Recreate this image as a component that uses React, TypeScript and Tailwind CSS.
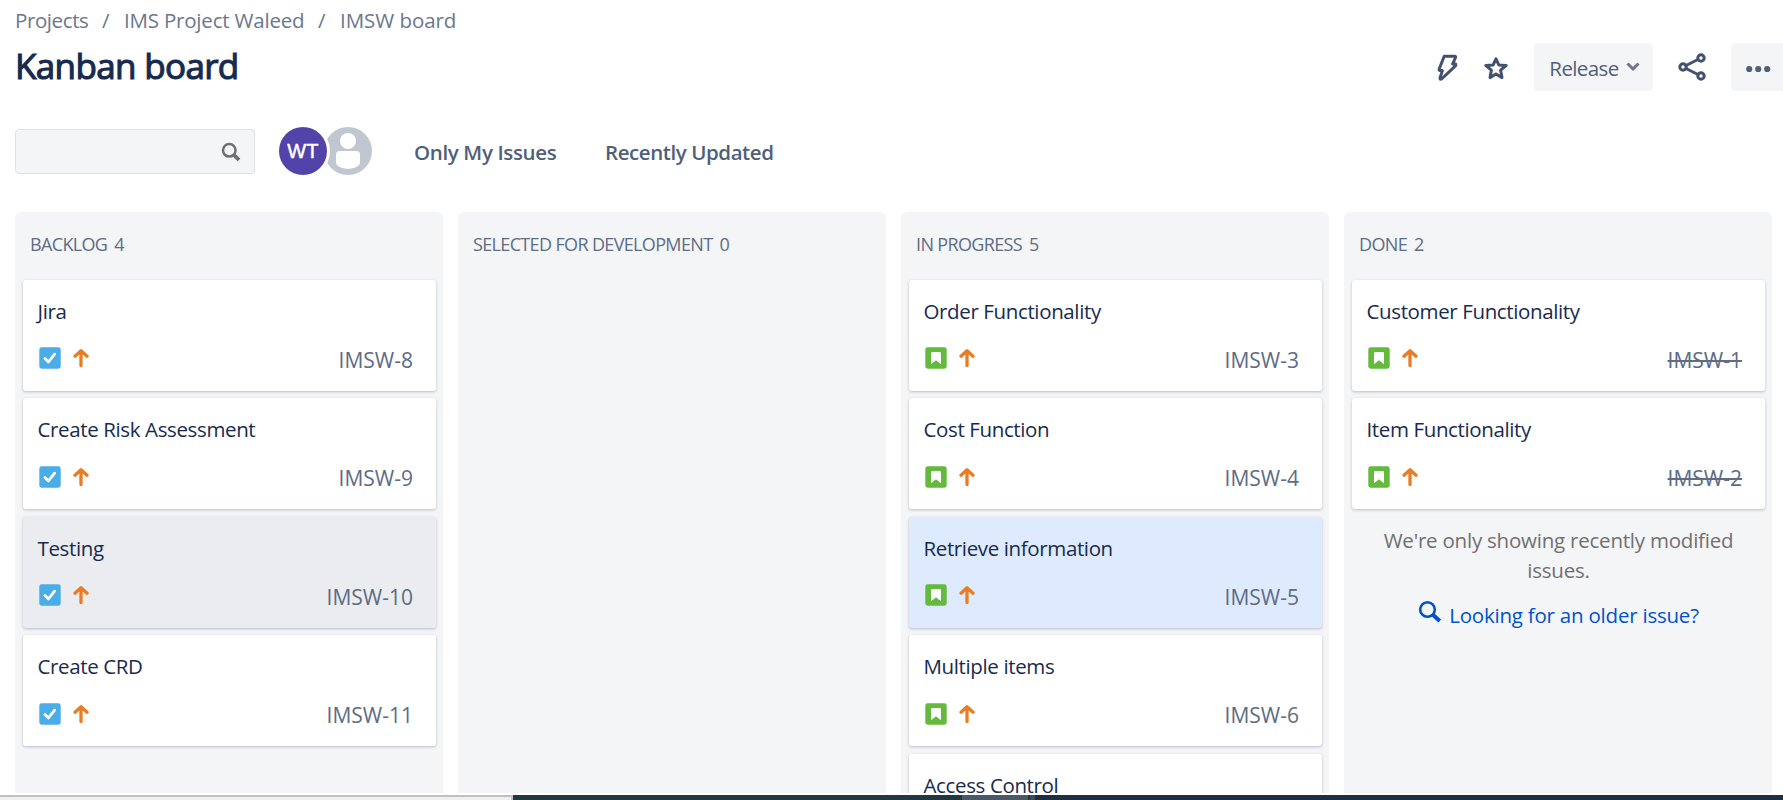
import React from "react";

type Kind = "task" | "story";
type Tone = "plain" | "hover" | "selected";
type Issue = { title: string; id: string; kind: Kind; tone?: Tone; done?: boolean };
type Column = { name: string; issues: Issue[]; note?: boolean; count: number };

const columns: Column[] = [
  {
    name: "BACKLOG",
    count: 4,
    issues: [
      { title: "Jira", id: "IMSW-8", kind: "task" },
      { title: "Create Risk Assessment", id: "IMSW-9", kind: "task" },
      { title: "Testing", id: "IMSW-10", kind: "task", tone: "hover" },
      { title: "Create CRD", id: "IMSW-11", kind: "task" },
    ],
  },
  { name: "SELECTED FOR DEVELOPMENT", count: 0, issues: [] },
  {
    name: "IN PROGRESS",
    count: 5,
    issues: [
      { title: "Order Functionality", id: "IMSW-3", kind: "story" },
      { title: "Cost Function", id: "IMSW-4", kind: "story" },
      { title: "Retrieve information", id: "IMSW-5", kind: "story", tone: "selected" },
      { title: "Multiple items", id: "IMSW-6", kind: "story" },
      { title: "Access Control", id: "IMSW-7", kind: "story" },
    ],
  },
  {
    name: "DONE",
    count: 2,
    note: true,
    issues: [
      { title: "Customer Functionality", id: "IMSW-1", kind: "story", done: true },
      { title: "Item Functionality", id: "IMSW-2", kind: "story", done: true },
    ],
  },
];

const tones: Record<Tone, string> = {
  plain: "bg-white",
  hover: "bg-[#ebecf0]",
  selected: "bg-[#deebff]",
};

function TaskIcon() {
  return (
    <svg className="h-[22px] w-[22px]" viewBox="0 0 22 22">
      <rect x="0.3" y="0.3" width="21.4" height="21.4" rx="2.4" fill="#4bade8" />
      <path d="M6 11.6 9.4 15 15.6 7.2" fill="none" stroke="#fff" strokeWidth="2.8" strokeLinecap="round" strokeLinejoin="round" />
    </svg>
  );
}

function StoryIcon() {
  return (
    <svg className="h-[22px] w-[22px]" viewBox="0 0 22 22">
      <rect x="0.3" y="0.3" width="21.4" height="21.4" rx="2.4" fill="#63ba3c" />
      <path d="M6 6.4Q6 5 7.4 5H14.6Q16 5 16 6.4V17.3L11 13.2 6 17.3Z" fill="#fff" />
    </svg>
  );
}

function PriorityIcon() {
  return (
    <svg className="h-[22px] w-[16px]" viewBox="0 0 16 22">
      <path d="M8 18.6V4.2M2 9.2 8 3.8 14 9.2" fill="none" stroke="#ea7d24" strokeWidth="3.3" strokeLinecap="round" strokeLinejoin="round" />
    </svg>
  );
}

function Card({ issue }: { issue: Issue }) {
  return (
    <article className={`h-[111px] shrink-0 rounded-[3px] pr-[23px] pl-[14.5px] pt-[16px] shadow-[0_1px_3px_rgba(23,43,77,0.28)] ${tones[issue.tone ?? "plain"]}`}>
      <h3 className="h-[30px] text-[20.5px] leading-[30px] tracking-[-0.37px] whitespace-nowrap text-[#172b4d]">{issue.title}</h3>
      <div className="mt-[17.3px] flex h-[30px] items-center pl-[1.5px]">
        {issue.kind === "task" ? <TaskIcon /> : <StoryIcon />}
        <span className="ml-[12px]">
          <PriorityIcon />
        </span>
        <span className={`mt-[3.6px] ml-auto text-[21px] leading-[30px] text-[#5e6c84] ${issue.done ? "line-through" : ""}`}>{issue.id}</span>
      </div>
    </article>
  );
}

export default function App() {
  return (
    <div className="flex h-[800px] w-[1783px] flex-col overflow-hidden bg-white font-['Open_Sans',sans-serif]">
      <nav className="mt-[5px] flex h-[30px] items-center pl-[15px] text-[20.5px] whitespace-nowrap text-[#6b778c]">
        <span className="w-[87px] tracking-[-0.4px]">Projects</span>
        <span className="w-[22px]">/</span>
        <span className="w-[194px] tracking-[-0.2px]">IMS Project Waleed</span>
        <span className="w-[22px]">/</span>
        <span className="tracking-[-0.05px]">IMSW board</span>
      </nav>

      <header className="flex h-[64px] shrink-0 items-center pl-[15px]">
        <h1 className="-mt-[2px] text-[35px] leading-[48px] font-normal tracking-[-0.65px] whitespace-nowrap text-[#172b4d] [-webkit-text-stroke:1.1px_#172b4d]">Kanban board</h1>
        <div className="ml-auto flex items-center">
          <svg className="h-[30px] w-[24px]" viewBox="0 0 24 30" fill="none" stroke="#42526e" strokeWidth="3" strokeLinejoin="round">
            <path d="M9.2 4.2H19.6Q21 4.2 20.5 5.6L17.6 12H20.7V13.6L6.6 27Q4.8 27.8 5 26L7.4 18.6H5Q3.8 18.2 4.2 17Z" />
          </svg>
          <svg className="mt-[2px] ml-[24px] h-[26px] w-[26px]" viewBox="0 0 26 26" fill="none" stroke="#42526e" strokeWidth="3" strokeLinejoin="round">
            <path d="M13 3.8 15.8 9.9 23.2 10.5 17.6 15.2 19 22.6 13 19 7 22.6 8.4 15.2 2.8 10.5 10.2 9.9Z" />
          </svg>
          <button className="ml-[25px] flex h-[48px] w-[119px] items-center rounded-[4px] bg-[#f4f5f7] pl-[15px] text-[20.5px] text-[#505f79]">
            <span className="mt-[2px] w-[70px] tracking-[-0.6px]">Release</span>
            <svg className="ml-[7px] h-[14px] w-[14px]" viewBox="0 0 14 14" fill="none" stroke="#6b778c" strokeWidth="3">
              <path d="M1.5 3.5 7 9 12.5 3.5" />
            </svg>
          </button>
          <svg className="ml-[24px] h-[30px] w-[30px]" viewBox="0 0 30 30" fill="none" stroke="#42526e" strokeWidth="3">
            <circle cx="6" cy="15" r="3.2" />
            <circle cx="24" cy="6" r="3.2" />
            <circle cx="24" cy="24" r="3.2" />
            <path d="M9 13.5 21 7.5M9 16.5 21 22.5" />
          </svg>
          <button className="ml-[24px] flex h-[48px] w-[52px] items-center rounded-l-[4px] bg-[#f4f5f7] pl-[15px]">
            <svg className="mt-[4px] h-[8px] w-[25px]" viewBox="0 0 25 8" fill="#505f79">
              <circle cx="3.2" cy="4" r="3.1" />
              <circle cx="12.2" cy="4" r="3.1" />
              <circle cx="21.2" cy="4" r="3.1" />
            </svg>
          </button>
        </div>
      </header>

      <section className="mt-[28px] flex h-[48px] shrink-0 items-center pl-[15px]">
        <div className="flex h-[45px] w-[240px] items-center justify-end rounded-[4px] border border-[#dfe1e6] bg-[#f4f5f7] pr-[13px]">
          <svg className="mt-[2px] h-[20px] w-[20px]" viewBox="0 0 20 20" fill="none" stroke="#6f6f6f">
            <circle cx="8.3" cy="8.3" r="6.3" strokeWidth="2.5" />
            <path d="M12.8 12.8 18 18" strokeWidth="3.8" />
          </svg>
        </div>
        <div className="ml-[24px] flex">
          <span className="z-10 flex h-[48px] w-[48px] items-center justify-center rounded-full bg-[#5243aa] font-['Liberation_Sans',sans-serif] text-[20px] tracking-[0.2px] text-white shadow-[0_0_0_3px_#fff] [-webkit-text-stroke:0.5px_white]">WT</span>
          <svg className="-ml-[3px] h-[48px] w-[48px]" viewBox="0 0 48 48">
            <circle cx="24" cy="24" r="24" fill="#c1c7d0" />
            <circle cx="24" cy="14" r="8" fill="#fff" />
            <path d="M12 28Q12 24 16 24H32Q36 24 36 28V35C36 44 12 44 12 35Z" fill="#fff" />
          </svg>
        </div>
        <span className="mt-[2px] ml-[42px] w-[191px] text-[20.5px] font-semibold tracking-[-0.36px] text-[#505f79]">Only My Issues</span>
        <span className="mt-[2px] text-[20.5px] font-semibold tracking-[-0.43px] text-[#505f79]">Recently Updated</span>
      </section>

      <main className="mt-[37px] flex h-[581px] shrink-0 gap-[15px] pl-[15px]">
        {columns.map((column) => (
          <section key={column.name} className="flex w-[428px] shrink-0 flex-col overflow-hidden rounded-t-[6px] bg-[#f4f5f7] pr-[7px] pl-[8px]">
            <h2 className="flex h-[67.9px] shrink-0 items-center gap-[7px] pb-[3px] pl-[7px] text-[18px] tracking-[-0.65px] whitespace-nowrap text-[#5e6c84]">
              <span>{column.name}</span>
              <span>{column.count}</span>
            </h2>
            <div className="flex flex-col gap-[7.5px]">
              {column.issues.map((issue) => (
                <Card key={issue.id} issue={issue} />
              ))}
            </div>
            {column.note && (
              <div className="mt-[16px] text-center text-[20.5px] leading-[30px] text-[#707070]">
                <p className="tracking-[-0.22px]">
                  We're only showing recently modified
                  <br />
                  issues.
                </p>
                <p className="mt-[15px] flex justify-center tracking-[-0.22px] text-[#0052cc]">
                  <svg className="mr-[7px] h-[24px] w-[24px]" viewBox="0 0 24 24" fill="none" stroke="#0052cc">
                    <circle cx="9.5" cy="9.5" r="7.3" strokeWidth="2.6" />
                    <path d="M14.6 14.6 21.8 21" strokeWidth="4" />
                  </svg>
                  <span>Looking for an older issue?</span>
                </p>
              </div>
            )}
          </section>
        ))}
      </main>

      <footer className="mt-[2px] flex h-[5px] shrink-0">
        <div className="w-[513px] border-t-2 border-r-2 border-[#c0c0c0] bg-[#f0f0f0]" />
        <div className="w-[449px] bg-[#213841]" />
        <div className="w-[66px] bg-[#4a5a64]" />
        <div className="w-[2px] bg-[#213841]" />
        <div className="w-[5px] bg-[#3d4c57]" />
        <div className="flex-1 bg-[#1d2f40]" />
      </footer>
    </div>
  );
}
